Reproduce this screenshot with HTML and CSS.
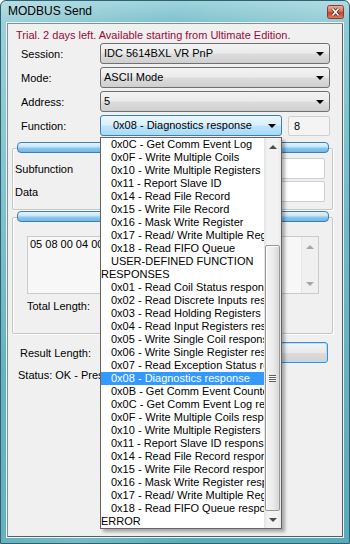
FILE: index.html
```html
<!DOCTYPE html>
<html lang="en">

<head>
    <meta charset="UTF-8">
    <title>MODBUS Send</title>
    <link rel="stylesheet" href="styles.css">
</head>

<body>
    <div class="window">
        <div class="titlebar">
            <span class="title">MODBUS Send</span>
            <span class="close-btn">
                <svg width="17" height="14" viewBox="0 0 17 14">
                    <defs>
                        <linearGradient id="closeFill" x1="0" y1="0" x2="0" y2="1">
                            <stop offset="0" stop-color="#eab3a3" />
                            <stop offset="0.45" stop-color="#d9735c" />
                            <stop offset="0.55" stop-color="#c2452b" />
                            <stop offset="1" stop-color="#d8826b" />
                        </linearGradient>
                    </defs>
                    <rect x="0.5" y="0.5" width="16" height="13" rx="2" fill="url(#closeFill)" stroke="#8a3b2c" />
                    <path d="M5.5 3.5 L11.5 10.5 M11.5 3.5 L5.5 10.5" stroke="#5a2a22" stroke-width="3.2" />
                    <path d="M5.5 3.5 L11.5 10.5 M11.5 3.5 L5.5 10.5" stroke="#fff" stroke-width="1.6" />
                </svg>
            </span>
        </div>

        <div class="client">
            <div class="trial">Trial. 2 days left. Available starting from Ultimate Edition.</div>

            <div class="form">
                <div class="row">
                    <label>Session:</label>
                    <div class="combo">IDC 5614BXL VR PnP<span class="arrow"></span></div>
                </div>
                <div class="row">
                    <label>Mode:</label>
                    <div class="combo">ASCII Mode<span class="arrow"></span></div>
                </div>
                <div class="row">
                    <label>Address:</label>
                    <div class="combo">5<span class="arrow"></span></div>
                </div>
                <div class="row">
                    <label>Function:</label>
                    <div class="combo combo-open">0x08 - Diagnostics response<span class="arrow"></span></div>
                    <div class="code-box">8</div>
                </div>
            </div>

            <div class="group group-sub">
                <div class="group-bar"></div>
                <div class="field-row">
                    <span>Subfunction</span>
                    <div class="edit"></div>
                </div>
                <div class="field-row">
                    <span>Data</span>
                    <div class="edit"></div>
                </div>
            </div>

            <div class="group group-packet">
                <div class="group-bar"></div>
                <div class="memo">
                    <div class="memo-text">05 08 00 04 00 00 E1 8F</div>
                    <div class="memo-scroll">
                        <span class="tri tri-up dim"></span>
                        <span class="tri tri-down dim"></span>
                    </div>
                </div>
                <div class="total">Total Length:</div>
            </div>

            <div class="result-row">
                <span>Result Length:</span>
                <div class="result-box"></div>
            </div>
            <div class="status">Status: OK - Presentation done</div>
        </div>

        <!-- open list of the Function combo -->
        <div class="droplist">
            <ul class="items">
                <li>0x0C - Get Comm Event Log</li>
                <li>0x0F - Write Multiple Coils</li>
                <li>0x10 - Write Multiple Registers</li>
                <li>0x11 - Report Slave ID</li>
                <li>0x14 - Read File Record</li>
                <li>0x15 - Write File Record</li>
                <li>0x16 - Mask Write Register</li>
                <li>0x17 - Read/ Write Multiple Registers</li>
                <li>0x18 - Read FIFO Queue</li>
                <li>USER-DEFINED FUNCTION</li>
                <li class="header">RESPONSES</li>
                <li>0x01 - Read Coil Status response</li>
                <li>0x02 - Read Discrete Inputs response</li>
                <li>0x03 - Read Holding Registers response</li>
                <li>0x04 - Read Input Registers response</li>
                <li>0x05 - Write Single Coil response</li>
                <li>0x06 - Write Single Register response</li>
                <li>0x07 - Read Exception Status response</li>
                <li class="selected">0x08 - Diagnostics response</li>
                <li>0x0B - Get Comm Event Counter response</li>
                <li>0x0C - Get Comm Event Log response</li>
                <li>0x0F - Write Multiple Coils response</li>
                <li>0x10 - Write Multiple Registers response</li>
                <li>0x11 - Report Slave ID response</li>
                <li>0x14 - Read File Record response</li>
                <li>0x15 - Write File Record response</li>
                <li>0x16 - Mask Write Register response</li>
                <li>0x17 - Read/ Write Multiple Registers response</li>
                <li>0x18 - Read FIFO Queue response</li>
                <li class="header">ERROR</li>
            </ul>
            <div class="vscroll">
                <div class="sb-btn"><span class="tri tri-up"></span></div>
                <div class="sb-track">
                    <div class="sb-thumb"><span class="grip"></span></div>
                </div>
                <div class="sb-btn"><span class="tri tri-down"></span></div>
            </div>
        </div>
    </div>
</body>

</html>
```

FILE: styles.css
```css
body {
    margin: 0;
    font-family: "Liberation Sans", Arial, sans-serif;
    font-size: 11px;
    color: #000;
    background: #fff;
}

.window {
    position: relative;
    width: 350px;
    height: 544px;
    box-sizing: border-box;
    display: flex;
    flex-direction: column;
    border: 1px solid #2d6370;
    border-radius: 6px 6px 0 0;
    background:
        linear-gradient(115deg, rgba(255, 255, 255, 0.25) 0, rgba(255, 255, 255, 0) 30%, rgba(255, 255, 255, 0.18) 55%, rgba(255, 255, 255, 0) 75%),
        linear-gradient(180deg, #9fd3dc 0, #7ec1cd 22px, #5aaab9 100%);
}

.titlebar {
    height: 21px;
    display: flex;
    align-items: flex-start;
    justify-content: space-between;
    padding: 0 5px 0 7px;
}

.title {
    font-size: 12px;
    line-height: 21px;
    color: #000;
}

.close-btn {
    margin-top: 4px;
    height: 14px;
}

.client {
    flex: 1;
    margin: 0 5px 5px;
    border: 1px solid #e9f4f6;
    box-shadow: inset 1px 1px 0 #7d9196, inset -1px -1px 0 #4b6369;
    background: #f0f0f0;
    padding-top: 6px;
}

.trial {
    padding-left: 9px;
    line-height: 13px;
    color: #9a0a3a;
    white-space: nowrap;
}

.form {
    display: grid;
    gap: 3px;
    margin-top: 1px;
    padding-left: 14px;
}

.row {
    display: flex;
    align-items: center;
    height: 21px;
}

.row label {
    width: 79px;
}

.combo {
    position: relative;
    box-sizing: border-box;
    width: 230px;
    height: 21px;
    line-height: 19px;
    padding-left: 3px;
    border: 1px solid #707070;
    border-radius: 3px;
    background: linear-gradient(180deg, #f3f3f3 0, #ebebeb 48%, #dddddd 52%, #cfcfcf 100%);
    white-space: nowrap;
}

.combo-open {
    width: 182px;
    padding-left: 12px;
    border-color: #3c7fb1;
    background: linear-gradient(180deg, #eaf6fd 0, #d9f0fc 48%, #bee6fd 52%, #a7d9f5 100%);
}

.arrow {
    position: absolute;
    right: 5px;
    top: 8px;
    border-left: 4px solid transparent;
    border-right: 4px solid transparent;
    border-top: 4px solid #000;
}

.code-box {
    box-sizing: border-box;
    width: 42px;
    height: 20px;
    margin-left: 6px;
    padding-left: 5px;
    line-height: 18px;
    border: 1px solid #cfcfcf;
    border-radius: 2px;
    background: #f4f4f4;
}

.group {
    width: 321px;
    box-sizing: border-box;
    margin-left: 5px;
    border: 1px solid #c6c6c6;
    box-shadow: inset 1px 1px 0 #fff, 1px 1px 0 #fff;
    border-radius: 2px;
}

.group-sub {
    margin-top: 12px;
    padding-bottom: 7px;
}

.group-packet {
    margin-top: 7px;
    padding-bottom: 20px;
}

.group-bar {
    width: 312px;
    height: 11px;
    box-sizing: border-box;
    margin: -7px 0 0 4px;
    border: 1px solid #3c7fb1;
    border-radius: 4px;
    background: linear-gradient(180deg, #e6f4fc 0, #c2e4f8 45%, #8ec8ee 55%, #71b6e6 100%);
}

.field-row {
    display: flex;
    align-items: center;
    height: 21px;
    padding-left: 2px;
    margin-top: 5px;
}

.field-row + .field-row {
    margin-top: 2px;
}

.edit {
    box-sizing: border-box;
    width: 225px;
    height: 21px;
    margin-left: auto;
    margin-right: 7px;
    border: 1px solid #c9ced6;
    border-radius: 2px;
    background: #fff;
}

.memo {
    display: flex;
    box-sizing: border-box;
    width: 292px;
    height: 58px;
    margin: 14px 0 0 14px;
    border: 1px solid #c8cbd0;
    background: #f7f7f7;
}

.memo-text {
    flex: 1;
    padding: 1px 2px;
    line-height: 13px;
    white-space: nowrap;
    overflow: hidden;
}

.memo-scroll {
    width: 17px;
    display: flex;
    flex-direction: column;
    align-items: center;
    justify-content: space-between;
    padding: 8px 0 7px;
    box-sizing: border-box;
    border-left: 1px solid #e6e6e6;
    background: #f0f0f0;
}

.total {
    margin-top: 6px;
    padding-left: 14px;
    line-height: 13px;
}

.result-row {
    display: flex;
    align-items: center;
    height: 21px;
    margin-top: 8px;
    padding-left: 13px;
}

.result-box {
    box-sizing: border-box;
    width: 228px;
    height: 21px;
    margin-left: auto;
    margin-right: 15px;
    border: 1px solid #3c8fd0;
    border-radius: 3px;
    box-shadow: inset 0 0 0 1px #b9def7;
    background: linear-gradient(180deg, #f4f4f4 0, #e9e9e9 50%, #dcdcdc 51%, #d2d2d2 100%);
}

.status {
    margin-top: 6px;
    padding-left: 11px;
    line-height: 13px;
    white-space: nowrap;
}

/* drop-down list, lies over the form */
.droplist {
    position: absolute;
    top: 136px;
    left: 99px;
    width: 182px;
    height: 392px;
    box-sizing: border-box;
    display: flex;
    border: 1px solid #646464;
    background: #fff;
    box-shadow: 3px 3px 3px rgba(0, 0, 0, 0.3);
}

.items {
    flex: 1;
    min-width: 0;
    margin: 0;
    padding: 0;
    list-style: none;
}

.items li {
    height: 13px;
    line-height: 13px;
    padding-left: 10px;
    white-space: nowrap;
    overflow: hidden;
}

.items li.header {
    padding-left: 0;
}

.items li.selected {
    background: #3399ff;
    color: #fff;
}

.vscroll {
    width: 17px;
    display: flex;
    flex-direction: column;
    background: linear-gradient(90deg, #e3e3e3 0, #f2f2f2 20%, #f2f2f2 80%, #e8e8e8 100%);
}

.sb-btn {
    height: 17px;
    display: flex;
    align-items: center;
    justify-content: center;
}

.sb-track {
    flex: 1;
    padding-top: 90px;
}

.sb-thumb {
    height: 266px;
    margin: 0 1px;
    box-sizing: border-box;
    display: flex;
    align-items: center;
    justify-content: center;
    border: 1px solid #989898;
    border-radius: 2px;
    background: linear-gradient(90deg, #f5f5f5 0, #ececec 50%, #d8d8d8 100%);
    box-shadow: inset 1px 1px 0 #fff;
}

.grip {
    width: 7px;
    height: 7px;
    background: repeating-linear-gradient(180deg, #5d5d5d 0, #5d5d5d 1px, #fafafa 1px, #fafafa 2px);
}

.tri {
    display: block;
    width: 0;
    height: 0;
    border-left: 4px solid transparent;
    border-right: 4px solid transparent;
}

.tri-up {
    border-bottom: 4px solid #4d4d4d;
}

.tri-down {
    border-top: 4px solid #4d4d4d;
}

.tri-up.dim {
    border-bottom-color: #a6a6a6;
}

.tri-down.dim {
    border-top-color: #a6a6a6;
}
```
